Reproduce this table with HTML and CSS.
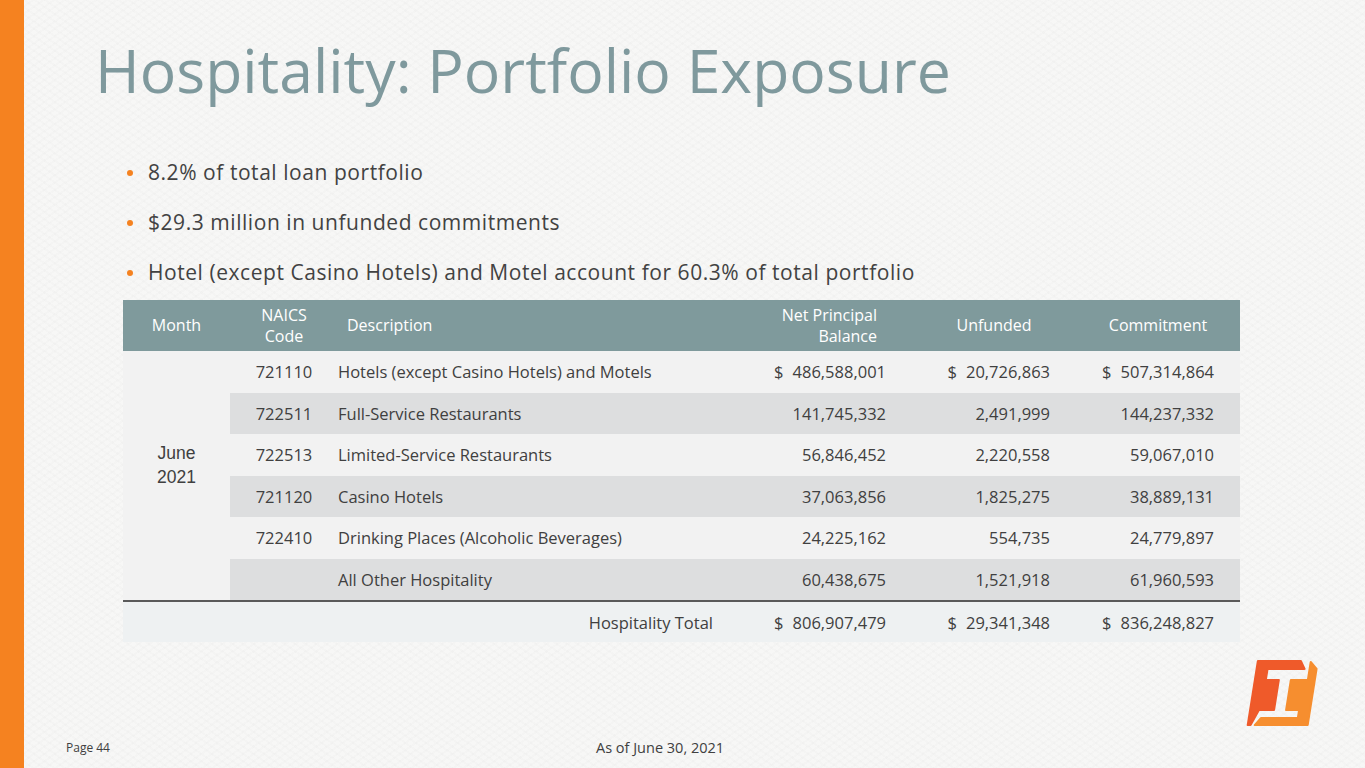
FILE: index.html
```html
<!DOCTYPE html>
<html lang="en">
<head>
<meta charset="utf-8">
<title>Hospitality: Portfolio Exposure</title>
<link rel="stylesheet" href="styles.css">
</head>
<body>
<div class="slide">
  <div class="bar"></div>
  <div class="content">
    <h1 class="title">Hospitality: Portfolio Exposure</h1>
    <ul class="bullets">
      <li>8.2% of total loan portfolio</li>
      <li>$29.3 million in unfunded commitments</li>
      <li>Hotel (except Casino Hotels) and Motel account for 60.3% of total portfolio</li>
    </ul>
    <table class="grid">
      <colgroup>
        <col class="c-month"><col class="c-code"><col class="c-desc"><col class="c-num"><col class="c-num"><col class="c-num">
      </colgroup>
      <thead>
        <tr>
          <th class="h-center">Month</th>
          <th class="h-center">NAICS<br>Code</th>
          <th class="h-desc">Description</th>
          <th class="h-npb">Net Principal<br>Balance</th>
          <th class="h-center">Unfunded</th>
          <th class="h-center">Commitment</th>
        </tr>
      </thead>
      <tbody>
        <tr class="light">
          <td class="month" rowspan="6">June<br>2021</td>
          <td class="code">721110</td>
          <td class="desc">Hotels (except Casino Hotels) and Motels</td>
          <td class="num"><span class="cur">$</span>486,588,001</td>
          <td class="num"><span class="cur">$</span>20,726,863</td>
          <td class="num"><span class="cur">$</span>507,314,864</td>
        </tr>
        <tr class="dark">
          <td class="code">722511</td>
          <td class="desc">Full-Service Restaurants</td>
          <td class="num">141,745,332</td>
          <td class="num">2,491,999</td>
          <td class="num">144,237,332</td>
        </tr>
        <tr class="light">
          <td class="code">722513</td>
          <td class="desc">Limited-Service Restaurants</td>
          <td class="num">56,846,452</td>
          <td class="num">2,220,558</td>
          <td class="num">59,067,010</td>
        </tr>
        <tr class="dark">
          <td class="code">721120</td>
          <td class="desc">Casino Hotels</td>
          <td class="num">37,063,856</td>
          <td class="num">1,825,275</td>
          <td class="num">38,889,131</td>
        </tr>
        <tr class="light">
          <td class="code">722410</td>
          <td class="desc">Drinking Places (Alcoholic Beverages)</td>
          <td class="num">24,225,162</td>
          <td class="num">554,735</td>
          <td class="num">24,779,897</td>
        </tr>
        <tr class="dark">
          <td class="code"></td>
          <td class="desc">All Other Hospitality</td>
          <td class="num">60,438,675</td>
          <td class="num">1,521,918</td>
          <td class="num">61,960,593</td>
        </tr>
      </tbody>
      <tfoot>
        <tr class="total">
          <td colspan="3" class="total-label">Hospitality Total</td>
          <td class="num"><span class="cur">$</span>806,907,479</td>
          <td class="num"><span class="cur">$</span>29,341,348</td>
          <td class="num"><span class="cur">$</span>836,248,827</td>
        </tr>
      </tfoot>
    </table>
    <div class="logo-area">
      <svg class="logo" width="76" height="68" viewBox="0 0 76 68" aria-label="logo">
        <g transform="translate(12,1) skewX(-9)">
          <polygon class="logo-red" points="1,1 44,1 49,9 12,9 12,20 25,20 25,50 10,50 4,65 1,65"/>
          <polygon class="logo-orange" points="54,2 61,9 61,65 8,65 13,58 50,58 50,50 37,50 37,20 54,20"/>
        </g>
      </svg>
    </div>
    <div class="footer">
      <span class="page">Page 44</span>
      <span class="asof">As of June 30, 2021</span>
    </div>
  </div>
</div>
</body>
</html>
```

FILE: styles.css
```css
html, body {
  margin: 0;
  padding: 0;
}

body {
  background: #f6f6f5;
  font-family: "Open Sans", "DejaVu Sans", sans-serif;
  color: #404040;
}

.slide {
  width: 1365px;
  height: 768px;
  display: flex;
  overflow: hidden;
  background-color: #f7f7f6;
  background-image:
    repeating-linear-gradient(35deg, rgba(0,0,0,0.012) 0 2px, transparent 2px 6px),
    repeating-linear-gradient(-35deg, rgba(0,0,0,0.012) 0 2px, transparent 2px 6px);
}

.bar {
  width: 24px;
  flex: none;
  background: #f58220;
}

.content {
  flex: 1;
  display: flex;
  flex-direction: column;
}

.title {
  margin: 34px 0 0 71px;
  font-size: 60.7px;
  line-height: 72px;
  font-weight: 400;
  color: #7f999d;
  letter-spacing: 0;
}

.bullets {
  list-style: none;
  margin: 52px 0 0 124px;
  padding: 0;
}

.bullets li {
  position: relative;
  height: 50px;
  line-height: 28px;
  font-size: 21px;
  letter-spacing: 0.55px;
  color: #424242;
}

.bullets li:last-child {
  height: 36px;
}

.bullets li::before {
  content: "";
  position: absolute;
  left: -21px;
  top: 12px;
  width: 6px;
  height: 6px;
  border-radius: 50%;
  background: #f58220;
}

.grid {
  margin: 6px 0 0 99px;
  width: 1117px;
  border-collapse: collapse;
  table-layout: fixed;
  font-size: 16.5px;
}

.c-month { width: 107px; }
.c-code { width: 108px; }
.c-desc { width: 410px; }
.c-num { width: 164px; }

.grid th {
  background: #7f9a9c;
  color: #ffffff;
  font-weight: 400;
  height: 51px;
  padding: 0;
  line-height: 21px;
  font-size: 16px;
}

.h-center { text-align: center; }
.h-desc { text-align: left; padding-left: 9px !important; }
.h-npb { text-align: right; padding-right: 35px !important; }

.grid td {
  height: 41.5px;
  padding: 0;
  white-space: nowrap;
}

.light td { background: #f2f2f2; }
.dark td { background: #dddedf; }

.grid td.month {
  background: #f2f2f2;
  text-align: center;
  font-family: "Liberation Sans", Arial, sans-serif;
  font-size: 17.5px;
  line-height: 24px;
  color: #404040;
  padding-bottom: 22px;
}

.code { text-align: center; }
.desc { text-align: left; }
.num { text-align: right; padding-right: 26px !important; }

.cur {
  margin-right: 9px;
}

.total td {
  background: #eef1f2;
  border-top: 2px solid #5a5a5a;
  height: 40px;
}

.total-label {
  text-align: right;
  padding-right: 35px !important;
}

.logo-area {
  flex: 1;
  display: flex;
  justify-content: flex-end;
  align-items: flex-start;
  padding: 17px 44px 0 0;
}

.logo-red { fill: #ef5a2a; stroke: #ef5a2a; stroke-width: 2; stroke-linejoin: round; }
.logo-orange { fill: #f68e2f; stroke: #f68e2f; stroke-width: 2; stroke-linejoin: round; }

.footer {
  height: 29px;
  display: flex;
  align-items: flex-start;
  padding-left: 42px;
}

.page {
  font-size: 12px;
  width: 530px;
  line-height: 18px;
}

.asof {
  font-size: 14.5px;
  line-height: 18px;
}
```
